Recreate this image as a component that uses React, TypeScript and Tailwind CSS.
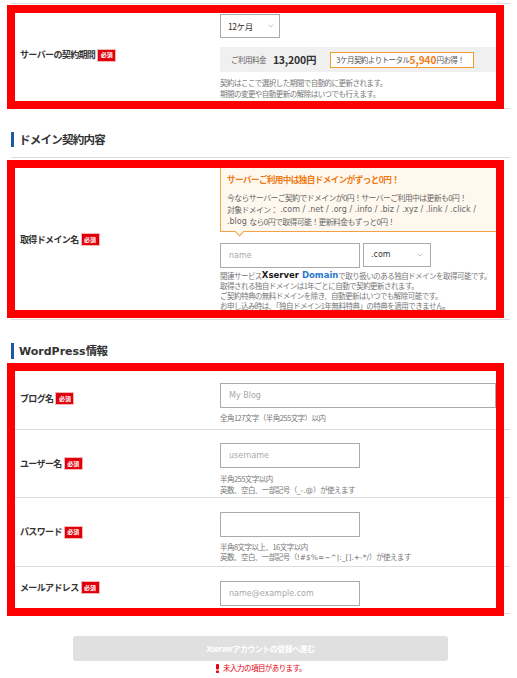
import { ChevronDown } from "lucide-react";
import type { ReactNode } from "react";

const Badge = () => (
  <span className="ml-[3px] inline-flex h-[11px] w-[17px] items-center justify-center bg-[#e0000b] text-[6px] font-bold leading-none tracking-normal text-white outline outline-1 outline-[#f5b5b5]">
    必須
  </span>
);

const L = ({ children, c = "" }: { children: ReactNode; c?: string }) => (
  <span className={`font-['DejaVu_Sans',sans-serif] tracking-normal ${c}`}>{children}</span>
);

const Label = ({ children, extra = "" }: { children: ReactNode; extra?: string }) => (
  <div className={`flex items-center self-center pl-[5px] text-[9px] font-bold leading-[12px] tracking-[-0.07em] text-[#333] ${extra}`}>
    <span>{children}</span>
    <Badge />
  </div>
);

const Note = ({ children, extra = "" }: { children: ReactNode; extra?: string }) => (
  <div className={`text-[7.5px] tracking-[-0.07em] text-[#777] ${extra}`}>{children}</div>
);

const Header = ({ children, h }: { children: ReactNode; h: string }) => (
  <div className={`ml-[4px] mt-[23px] flex items-center ${h}`}>
    <div className="h-full w-[3px] bg-[#1d5aa5]" />
    <span className="ml-[5px] text-[11.5px] font-bold leading-[15px] tracking-[-0.065em] text-[#333]">{children}</span>
  </div>
);

const Ext = ({ top }: { top: string }) => (
  <div className={`absolute -right-[14px] h-px w-[6px] bg-[#ddd] ${top}`} />
);

const inputCls =
  "h-[25px] border border-[#aaa] bg-white pl-[8px] font-['DejaVu_Sans',sans-serif] text-[8px] text-[#333] outline-none placeholder:text-[#a8a8a8]";

const lineCls = "flex h-[10.25px] items-center whitespace-nowrap";

export default function App() {
  return (
    <div className="w-[517px] bg-white pl-[7px] pt-[3px] font-['Noto_Sans_CJK_JP','Noto_Sans',sans-serif]">
      <div className="ml-[4px] h-px w-[499px] bg-[#ddd]" />

      {/* Box 1 */}
      <div className="relative mt-[1px] w-[497px] border-[8px] border-[#ff0000]">
        <div className="-bottom-[8px] absolute -right-[14px] h-px w-[6px] bg-[#ddd]" />
        <div className="grid h-[88px] grid-cols-[205px_1fr] overflow-hidden">
          <Label extra="pb-[4px]">サーバーの契約期間</Label>
          <div className="pt-[1px]">
            <div className="flex h-[24px] w-[60px] items-center justify-between border border-[#aaa] bg-white pl-[7px] pr-[4px] text-[8.5px] tracking-[-0.05em] text-[#333]">
              <span>12ケ月</span>
              <ChevronDown size={8} strokeWidth={1.5} color="#888" />
            </div>
            <div className="mt-[9px] flex h-[25px] items-center bg-[#f0f0f0] pl-[11px]">
              <span className="text-[7.5px] tracking-[-0.07em] text-[#666]">ご利用料金</span>
              <span className="ml-[7px] text-[10.5px] font-bold tracking-[-0.02em] text-[#333]">13,200円</span>
              <div className="ml-[14px] flex h-[16px] w-[144px] items-center border border-[#f39a2e] bg-white pl-[5px] text-[7.5px] tracking-[-0.07em] text-[#555]">
                3ケ月契約よりトータル
                <span className="text-[10px] font-bold tracking-normal text-[#f07a14]">5,940</span>
                円お得！
              </div>
            </div>
            <Note extra="mt-[5px] leading-[11px]">
              契約はここで選択した期間で自動的に更新されます。
              <br />
              期間の変更や自動更新の解除はいつでも行えます。
            </Note>
          </div>
        </div>
      </div>

      <Header h="h-[15px]">ドメイン契約内容</Header>
      <div className="ml-[4px] mt-[10px] h-px w-[499px] bg-[#ddd]" />

      {/* Box 2 */}
      <div className="relative mt-[2px] w-[497px] border-[8px] border-[#ff0000]">
        <div className="grid h-[142px] grid-cols-[205px_1fr] overflow-hidden">
          <Label>取得ドメイン名</Label>
          <div>
            <div className="relative border-b border-l border-[#f5a04a] bg-[#fff8ee] pb-[3px] pl-[6px] pt-[5px]">
              <div className="text-[8.6px] font-bold leading-[12px] tracking-[-0.07em] text-[#f07a14]">
                サーバーご利用中は独自ドメインがずっと0円！
              </div>
              <div className="mt-[7px] text-[7.8px] tracking-[-0.07em] text-[#666]">
                <div className="flex h-[12px] items-center whitespace-nowrap">
                  今ならサーバーご契約でドメインが0円！サーバーご利用中は更新も0円！
                </div>
                <div className="flex h-[12px] items-center whitespace-pre">
                  対象ドメイン：<L c="text-[8px]"> .com / .net / .org / .info / .biz / .xyz / .link / .click /</L>
                </div>
                <div className="flex h-[12px] items-center whitespace-pre">
                  <L c="text-[8px]">.blog </L>なら0円で取得可能！更新料金もずっと0円！
                </div>
              </div>
              <div className="absolute -bottom-[4px] left-[15px] h-[7px] w-[7px] rotate-45 border-b border-r border-[#f5a04a] bg-[#fff8ee]" />
            </div>
            <div className="mt-[11px] flex gap-[3px]">
              <input className={`${inputCls} h-[24px] w-[140px]`} placeholder="name" readOnly />
              <div className="flex h-[24px] w-[68px] items-center justify-between border border-[#aaa] bg-white pl-[7px] pr-[6px] font-['DejaVu_Sans',sans-serif] text-[8px] text-[#333]">
                <span>.com</span>
                <ChevronDown size={8} strokeWidth={1.5} color="#888" />
              </div>
            </div>
            <Note extra="mt-[2px]">
              <div className={`${lineCls} whitespace-pre`}>
                関連サービス
                <L c="text-[8.5px] font-bold text-[#1a1a1a]">Xserver</L>
                <L c="text-[8.5px] font-bold text-[#2a78cc]"> Domain</L>
                で取り扱いのある独自ドメインを取得可能です。
              </div>
              <div className={lineCls}>取得される独自ドメインは1年ごとに自動で契約更新されます。</div>
              <div className={lineCls}>ご契約特典の無料ドメインを除き、自動更新はいつでも解除可能です。</div>
              <div className={lineCls}>お申し込み時は、「独自ドメイン1年無料特典」の特典を適用できません。</div>
            </Note>
          </div>
        </div>
      </div>
      <div className="ml-[4px] mt-[1px] h-px w-[499px] bg-[#ddd]" />

      <Header h="h-[16px]">
        <L c="text-[11px]">WordPress</L>情報
      </Header>

      {/* Box 3 */}
      <div className="relative mt-[4px] w-[497px] border-[8px] border-[#ff0000]">
        <Ext top="top-[58px]" />
        <Ext top="top-[126px]" />
        <Ext top="top-[195px]" />
        <Ext top="top-[242px]" />
        <div className="h-[237px] overflow-hidden">
          <div className="grid h-[59px] grid-cols-[205px_1fr] border-b border-[#ddd]">
            <Label extra="pb-[3px]">ブログ名</Label>
            <div className="pt-[8px]">
              <input className={`${inputCls} w-full`} placeholder="My Blog" readOnly />
              <Note extra="mt-[5px] leading-[10px]">全角127文字（半角255文字）以内</Note>
            </div>
          </div>
          <div className="grid h-[68px] grid-cols-[205px_1fr] border-b border-[#ddd]">
            <Label>ユーザー名</Label>
            <div className="pt-[9px]">
              <input className={`${inputCls} w-[140px]`} placeholder="username" readOnly />
              <Note extra="mt-[5px] leading-[11px]">
                半角255文字以内
                <br />
                英数、空白、一部記号（<L c="text-[7.5px]">_-.@</L>）が使えます
              </Note>
            </div>
          </div>
          <div className="grid h-[69px] grid-cols-[205px_1fr] border-b border-[#ddd]">
            <Label>パスワード</Label>
            <div className="pt-[10px]">
              <input className={`${inputCls} w-[140px]`} readOnly />
              <Note extra="mt-[5px] leading-[10px]">
                半角8文字以上、16文字以内
                <br />
                英数、空白、一部記号（<L c="text-[7.5px]">!#$%=~^|:_[].+-*/</L>）が使えます
              </Note>
            </div>
          </div>
          <div className="grid h-[41px] grid-cols-[205px_1fr]">
            <Label>メールアドレス</Label>
            <div className="pt-[10px]">
              <input className={`${inputCls} w-[140px]`} placeholder="name@example.com" readOnly />
            </div>
          </div>
        </div>
      </div>

      {/* Button */}
      <div className="ml-[66px] mt-[20px] w-[375px]">
        <div className="flex h-[25px] items-center justify-center rounded-[3px] bg-[#e0e0e0] text-[8px] font-bold tracking-[-0.07em] text-white">
          Xserverアカウントの登録へ進む
        </div>
        <div className="mt-[2px] flex items-center justify-center gap-[3px] leading-[10px]">
          <svg width="5" height="9" viewBox="0 0 5 9">
            <rect x="1" y="0" width="3" height="5.5" rx="1" fill="#e60012" />
            <rect x="1" y="6.5" width="3" height="2.5" rx="0.8" fill="#e60012" />
          </svg>
          <span className="text-[7.5px] tracking-[-0.07em] text-[#e60012]">未入力の項目があります。</span>
        </div>
      </div>
    </div>
  );
}
